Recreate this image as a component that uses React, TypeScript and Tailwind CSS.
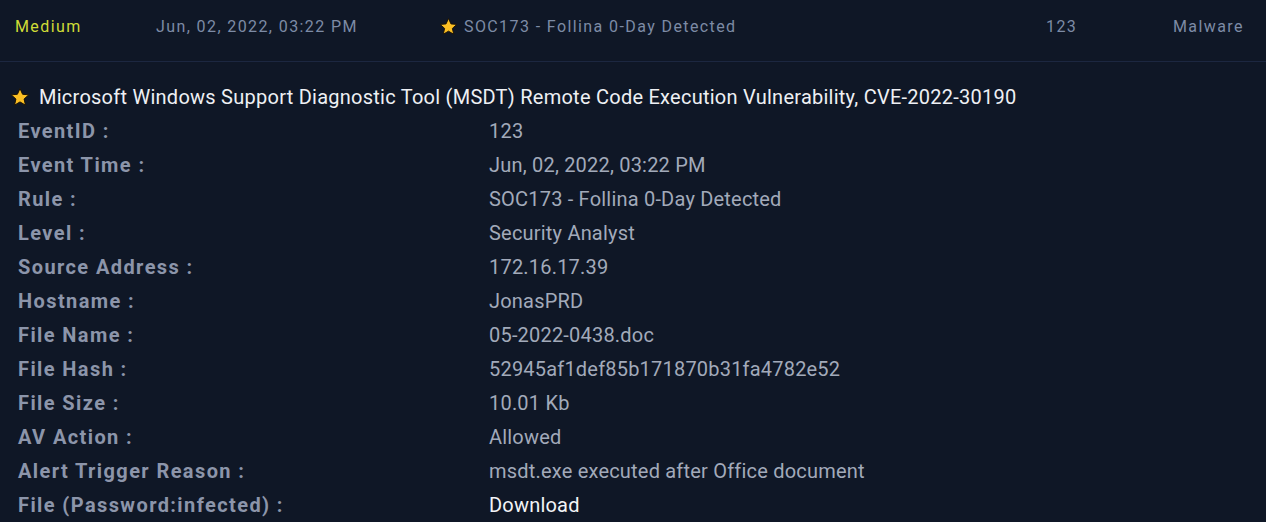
import React from "react";

const rows: [string, string][] = [
  ["EventID :", "123"],
  ["Event Time :", "Jun, 02, 2022, 03:22 PM"],
  ["Rule :", "SOC173 - Follina 0-Day Detected"],
  ["Level :", "Security Analyst"],
  ["Source Address :", "172.16.17.39"],
  ["Hostname :", "JonasPRD"],
  ["File Name :", "05-2022-0438.doc"],
  ["File Hash :", "52945af1def85b171870b31fa4782e52"],
  ["File Size :", "10.01 Kb"],
  ["AV Action :", "Allowed"],
  ["Alert Trigger Reason :", "msdt.exe executed after Office document"],
];

function Star({ size = 16 }: { size?: number }) {
  return (
    <svg width={size} height={size} viewBox="0 0 24 24">
      <path
        d="M12 1.8l3.1 6.9 7.4.7-5.6 5 1.7 7.4L12 17.9l-6.6 3.9 1.7-7.4-5.6-5 7.4-.7z"
        fill="#fbbf24"
        stroke="#1a1205"
        strokeWidth="1.2"
        strokeLinejoin="round"
      />
    </svg>
  );
}

export default function App() {
  return (
    <div
      className="w-[1266px] h-[522px] overflow-hidden bg-[#0f1726]"
      style={{ fontFamily: "Roboto, 'Liberation Sans', sans-serif" }}
    >
      <div className="h-[62px] flex items-center text-[16px] tracking-[1.4px] text-[#7d8ba5] border-b border-[#1c2740] pb-[8px]">
        <div className="w-[156px] pl-[15px] text-[#cfdc36]">Medium</div>
        <div className="w-[283px]">Jun, 02, 2022, 03:22 PM</div>
        <div className="w-[607px] flex items-center gap-[6px]">
          <Star size={19} />
          <span>SOC173 - Follina 0-Day Detected</span>
        </div>
        <div className="w-[127px]">123</div>
        <div>Malware</div>
      </div>
      <div className="pl-[10px] pt-[17px] flex items-center gap-[9px] text-[20px] tracking-[0.25px] text-[#eef0f4] h-[52px]">
        <Star size={20} />
        <span>Microsoft Windows Support Diagnostic Tool (MSDT) Remote Code Execution Vulnerability, CVE-2022-30190</span>
      </div>
      <div className="pl-[18px] grid grid-cols-[471px_1fr]">
        {rows.map(([k, v]) => (
          <React.Fragment key={k}>
            <div className="h-[34px] flex items-center text-[20px] font-bold tracking-[1.4px] text-[#8c95aa]">{k}</div>
            <div className="h-[34px] flex items-center text-[20px] tracking-[0.2px] text-[#a2aaba]">{v}</div>
          </React.Fragment>
        ))}
        <div className="h-[34px] flex items-center text-[20px] font-bold tracking-[1.4px] text-[#8c95aa]">File (Password:infected) :</div>
        <div className="h-[34px] flex items-center text-[20px] tracking-[0.2px] text-[#f2f4f7]">Download</div>
      </div>
    </div>
  );
}
